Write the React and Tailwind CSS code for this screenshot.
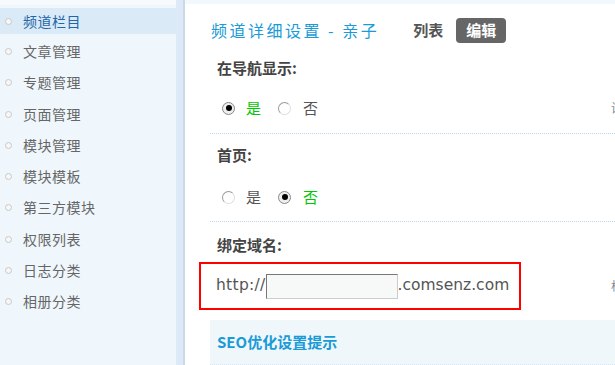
import React from "react";

const cjk = { fontFamily: '"Noto Sans CJK SC", "Noto Sans", sans-serif' };
const latin = { fontFamily: '"DejaVu Sans", "Noto Sans CJK SC", sans-serif' };

const menu = ["频道栏目", "文章管理", "专题管理", "页面管理", "模块管理", "模块模板", "第三方模块", "权限列表", "日志分类", "相册分类"];

function Radio({ checked }) {
  return checked ? (
    <span className="inline-flex w-[13px] h-[13px] shrink-0 rounded-full border border-[#888] bg-[#eee] items-center justify-center">
      <span className="w-[6px] h-[6px] rounded-full bg-black" />
    </span>
  ) : (
    <span className="inline-flex w-[13px] h-[13px] shrink-0 rounded-full border border-[#999] border-b-[#ddd] border-r-[#ddd] bg-white" />
  );
}

function RadioRow({ yes, rightText }) {
  return (
    <div className="grid grid-cols-[401px_max-content] items-center h-[24px] whitespace-nowrap">
      <div className="flex items-center pl-[12px] text-[15px]" style={cjk}>
        <Radio checked={yes} />
        <span className={"ml-[11px] " + (yes ? "text-[#00c800]" : "text-[#555]")}>是</span>
        <span className="ml-[17px] flex items-center"><Radio checked={!yes} /></span>
        <span className={"ml-[12px] " + (!yes ? "text-[#00c800]" : "text-[#555]")}>否</span>
      </div>
      <div className="text-[12px] text-[#888]" style={cjk}>{rightText}</div>
    </div>
  );
}

export default function App() {
  return (
    <div className="w-[615px] h-[365px] overflow-hidden flex bg-white" style={cjk}>
      <div className="w-[176px] shrink-0 bg-[#eff7fc] flex flex-col">
        <div className="h-[5px] bg-[#f6fafd]" />
        <div className="h-[3px]" />
        {menu.map((m, i) => (
          <div key={m} className={i === 0 ? "h-[26px] mb-[2px] bg-[#dbeaf7] flex items-center shrink-0" : "h-[31.25px] flex items-center shrink-0"}>
            <span className="ml-[5px] w-[7px] h-[7px] rounded-full border border-[#c8c8c8] bg-[#f7f7f7]" />
            <span className={"ml-[11px] text-[14px] tracking-[0.5px] " + (i === 0 ? "text-[#2366a8]" : "text-[#666]")}>{m}</span>
          </div>
        ))}
      </div>
      <div className="w-[7px] shrink-0 bg-[#dde9f7]" />
      <div className="w-[2px] shrink-0 bg-[#c9d9e8]" />
      <div className="flex-1 min-w-0 flex flex-col">
        <div className="h-[4px] bg-[#f3f8fc]" />
        <div className="pl-[25px] flex flex-col">
          <div className="h-[52px] flex items-center whitespace-nowrap">
            <span className="ml-[1px] text-[16px] tracking-[2.5px] text-[#1a9bd7]">频道详细设置 - 亲子</span>
            <span className="ml-[34px] text-[15px] font-bold text-[#555]">列表</span>
            <span className="ml-[13px] h-[25px] w-[50px] rounded-[4px] bg-[#666] text-white font-bold text-[15px] flex items-center justify-center">编辑</span>
          </div>
          <div className="h-[24px] flex items-center pl-[7px] text-[15px] font-bold text-[#444]">在导航显示:</div>
          <div className="mt-[16px]"><RadioRow yes={true} rightText="设置是否在导航中显示" /></div>
          <div className="mt-[13px] border-b border-dotted border-[#bcd6ea]" />
          <div className="mt-[9px] h-[24px] flex items-center pl-[7px] text-[15px] font-bold text-[#444]">首页:</div>
          <div className="mt-[18px]"><RadioRow yes={false} rightText="" /></div>
          <div className="mt-[12px] border-b border-dotted border-[#bcd6ea]" />
          <div className="mt-[11px] h-[24px] flex items-center pl-[7px] text-[15px] font-bold text-[#444]">绑定域名:</div>
          <div className="mt-[5px] -ml-[11px] flex items-center whitespace-nowrap">
            <div className="w-[322px] h-[48px] shrink-0 border-2 border-[#f00] flex items-center pl-[15px] text-[15.5px] text-[#555]" style={latin}>
              <span className="tracking-[0.3px]">http://</span>
              <span className="w-[132px] h-[25px] bg-[#f7f8f8] border border-[#ccc] border-t-[#777] border-l-[#777]" />
              <span>.comsenz.com</span>
            </div>
            <div className="ml-[90px] text-[12px] text-[#888]" style={cjk}>格式：</div>
          </div>
          <div className="mt-[10px] h-[45px] bg-[#f0f7fb] border-b border-dotted border-[#d6e6f2] flex items-center pl-[7px]">
            <span className="text-[15px] font-bold text-[#1a9bd7]">SEO优化设置提示</span>
          </div>
        </div>
      </div>
    </div>
  );
}
